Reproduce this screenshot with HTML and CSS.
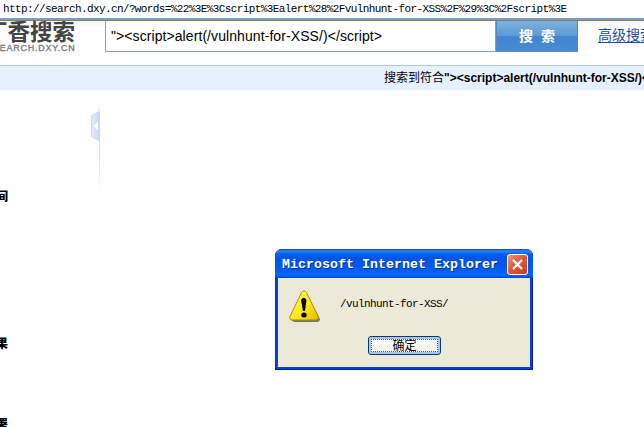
FILE: index.html
```html
<!DOCTYPE html>
<html lang="zh-CN">
<head>
<meta charset="utf-8">
<title>丁香搜索</title>
<link rel="stylesheet" href="styles.css">
</head>
<body>
<div class="address">http://search.dxy.cn/?words=%22%3E%3Cscript%3Ealert%28%2Fvulnhunt-for-XSS%2F%29%3C%2Fscript%3E</div>
<header class="header">
  <div class="logo"><div class="logo-cn">丁香搜索</div><div class="logo-en">SEARCH.DXY.CN</div></div>
  <div class="field"><span>"&gt;&lt;script&gt;alert(/vulnhunt-for-XSS/)&lt;/script&gt;</span></div>
  <div class="search">搜 索</div>
  <a class="advanced">高级搜索</a>
</header>
<div class="summary"><span>搜索到符合</span><b>"&gt;&lt;script&gt;alert(/vulnhunt-for-XSS/)&lt;/script&gt;</b></div>
<main class="content">
  <nav class="side"><b>时间</b><b>结果</b><b>部署</b></nav>
  <svg class="handle" width="12" height="92" viewBox="0 0 12 92">
    <defs>
      <linearGradient id="line" x1="0" y1="0" x2="0" y2="1"><stop offset="0" stop-color="#c9dafa" stop-opacity=".2"/><stop offset=".15" stop-color="#c5d8f5"/><stop offset=".6" stop-color="#d0dff6"/><stop offset="1" stop-color="#fff"/></linearGradient>
      <linearGradient id="tab"><stop offset="0" stop-color="#e5eefb"/><stop offset="1" stop-color="#c5d8f3"/></linearGradient>
    </defs>
    <path d="M1.500 12.500L9 8.500V37.500L1.500 33.500Z" fill="url(#tab)" stroke="#c8d9f2"/>
    <path d="M3.500 23L8 18.500V27.500Z" fill="#fff"/>
    <rect x="9" y="1" width="1" height="91" fill="url(#line)"/>
  </svg>
</main>
<section class="dialog">
  <div class="titlebar">
    <span class="title">Microsoft Internet Explorer</span>
    <svg class="close" width="21" height="21" viewBox="0 0 21 21">
      <defs><linearGradient id="red" x1="0" y1="0" x2="1" y2="1"><stop offset="0" stop-color="#f09c82"/><stop offset=".4" stop-color="#e06042"/><stop offset="1" stop-color="#c53a18"/></linearGradient></defs>
      <rect x=".5" y=".5" width="20" height="20" rx="2.500" fill="url(#red)" stroke="#fff"/>
      <path d="M6 6L15 15M15 6L6 15" stroke="#fff" stroke-width="2.200"/>
    </svg>
  </div>
  <div class="body">
    <div class="message">
      <svg width="32" height="32" viewBox="0 0 32 32">
        <defs><linearGradient id="warn" x1="0" y1="0" x2="1" y2="1"><stop offset="0" stop-color="#fff86a"/><stop offset=".5" stop-color="#ffed20"/><stop offset="1" stop-color="#e6b800"/></linearGradient></defs>
        <path d="M17 3L31 29Q31 32 28 32H5L2 30Z" fill="#77756f"/>
        <path d="M12.500 2.500Q15 -.8 17.500 2.500L29.300 26.500Q30 30 27 30H3Q0 30 1 26.500Z" fill="url(#warn)" stroke="#a98c0c"/>
        <path d="M12 10Q14.800 5.500 17.500 10L16 21H14Z" fill="#000"/>
        <ellipse cx="15" cy="25" rx="2.700" ry="2.500" fill="#000"/>
      </svg>
      <span>/vulnhunt-for-XSS/</span>
    </div>
    <div class="ok"><span>确定</span></div>
  </div>
</section>
</body>
</html>
```
FILE: styles.css
```css
* { box-sizing: border-box; }
body {
  margin: 0;
  width: 644px;
  height: 427px;
  overflow: hidden;
  background: #fff;
  color: #000;
  font-family: "Liberation Sans", "Noto Sans CJK SC", sans-serif;
}
.address {
  height: 21px;
  padding-left: 3px;
  border-bottom: 1px solid #817d69;
  box-shadow: inset 0 -2px #7e9dbb;
  font: 11px/19px "Liberation Mono", monospace;
  letter-spacing: -.607px;
  white-space: nowrap;
}
.header {
  display: flex;
  height: 44px;
  background: linear-gradient(#f5f5f1, #fff 6px);
  white-space: nowrap;
  overflow: hidden;
}
.header > * { flex: none; }
.logo {
  width: 105px;
  height: 44px;
  color: #444;
}
.logo-cn {
  margin-left: -15px;
  height: 23px;
  font: bold 22.500px/19px "Noto Sans CJK SC", sans-serif;
}
.logo-en {
  margin-left: -7px;
  font-size: 9px;
  line-height: 9px;
  letter-spacing: .75px;
  color: #777;
  -webkit-text-stroke: .3px #777;
}
.field {
  width: 391px;
  height: 31px;
  border: 1px solid #8da0b1;
  border-top: 0;
  background: #fff;
  padding-left: 5px;
  font-size: 14px;
  line-height: 30px;
  letter-spacing: .08px;
}
.search {
  width: 82px;
  height: 31px;
  border: 1px solid #5389c0;
  border-top: 0;
  background: linear-gradient(#7db2e0, #5b99d6 50%, #4285cf 52%, #468bd3);
  color: #fff;
  font: bold 14px/29px "Noto Sans CJK SC", sans-serif;
  text-align: center;
  word-spacing: 5px;
}
.advanced {
  margin-left: 20px;
  color: #1c4da0;
  font: 14px/27px "Noto Sans CJK SC", sans-serif;
  text-decoration: underline;
  text-underline-offset: 2px;
}
.summary {
  height: 25px;
  padding-left: 384px;
  border-top: 1px solid #b0caef;
  background: #e7f0ff;
  font-size: 12px;
  line-height: 24px;
  white-space: nowrap;
  overflow: hidden;
}
.content {
  display: flex;
  height: 337px;
}
.side {
  display: flex;
  flex-direction: column;
  width: 90px;
  padding-top: 98px;
  font: bold 12px/16px "Noto Sans CJK SC", sans-serif;
}
.side b { margin-left: -16px; }
.side b + b { margin-top: 131px; }
.side b + b + b { margin-top: 65px; }
.handle { margin-top: 13px; }
.dialog {
  position: absolute;
  left: 275px;
  top: 249px;
  width: 258px;
  height: 121px;
  padding: 0 3px 3px;
  border-radius: 7px 7px 0 0;
  background: #0840d8;
  box-shadow: inset -1px -1px #001e9c, inset 1px 0 #0830c4;
}
.titlebar {
  display: flex;
  align-items: center;
  height: 29px;
  margin: 0 -3px;
  padding: 2px 5px 0 7px;
  border-radius: 7px 7px 0 0;
  background: linear-gradient(#0844c4, #2f86fb 2px, #0560eb 5px, #0054e3 10px, #005cf5 20px, #0368ff 26px, #0046d5);
}
.title {
  flex: 1;
  color: #fff;
  font: bold 13.333px/20px "Liberation Mono", monospace;
  text-shadow: 1px 1px #0b2f86;
  white-space: nowrap;
}
.close { flex: none; }
.body {
  height: 89px;
  padding: 12px 0 0 11px;
  background: #ece9d8;
}
.message {
  display: flex;
  gap: 19px;
  height: 46px;
  font: 11px/29px "Liberation Mono", monospace;
  letter-spacing: -.6px;
}
.ok {
  width: 73px;
  height: 19px;
  margin-left: 79px;
  padding: 2px;
  border: 1px solid #003c74;
  border-radius: 3px;
  background: linear-gradient(#fff, #f1f0e8);
  box-shadow: inset 0 0 0 2px #a9c4f0;
  font: 12px/12px "Noto Sans CJK SC", sans-serif;
  text-align: center;
}
.ok span {
  display: block;
  height: 13px;
  outline: 1px dotted #555;
  outline-offset: -1px;
}
```
